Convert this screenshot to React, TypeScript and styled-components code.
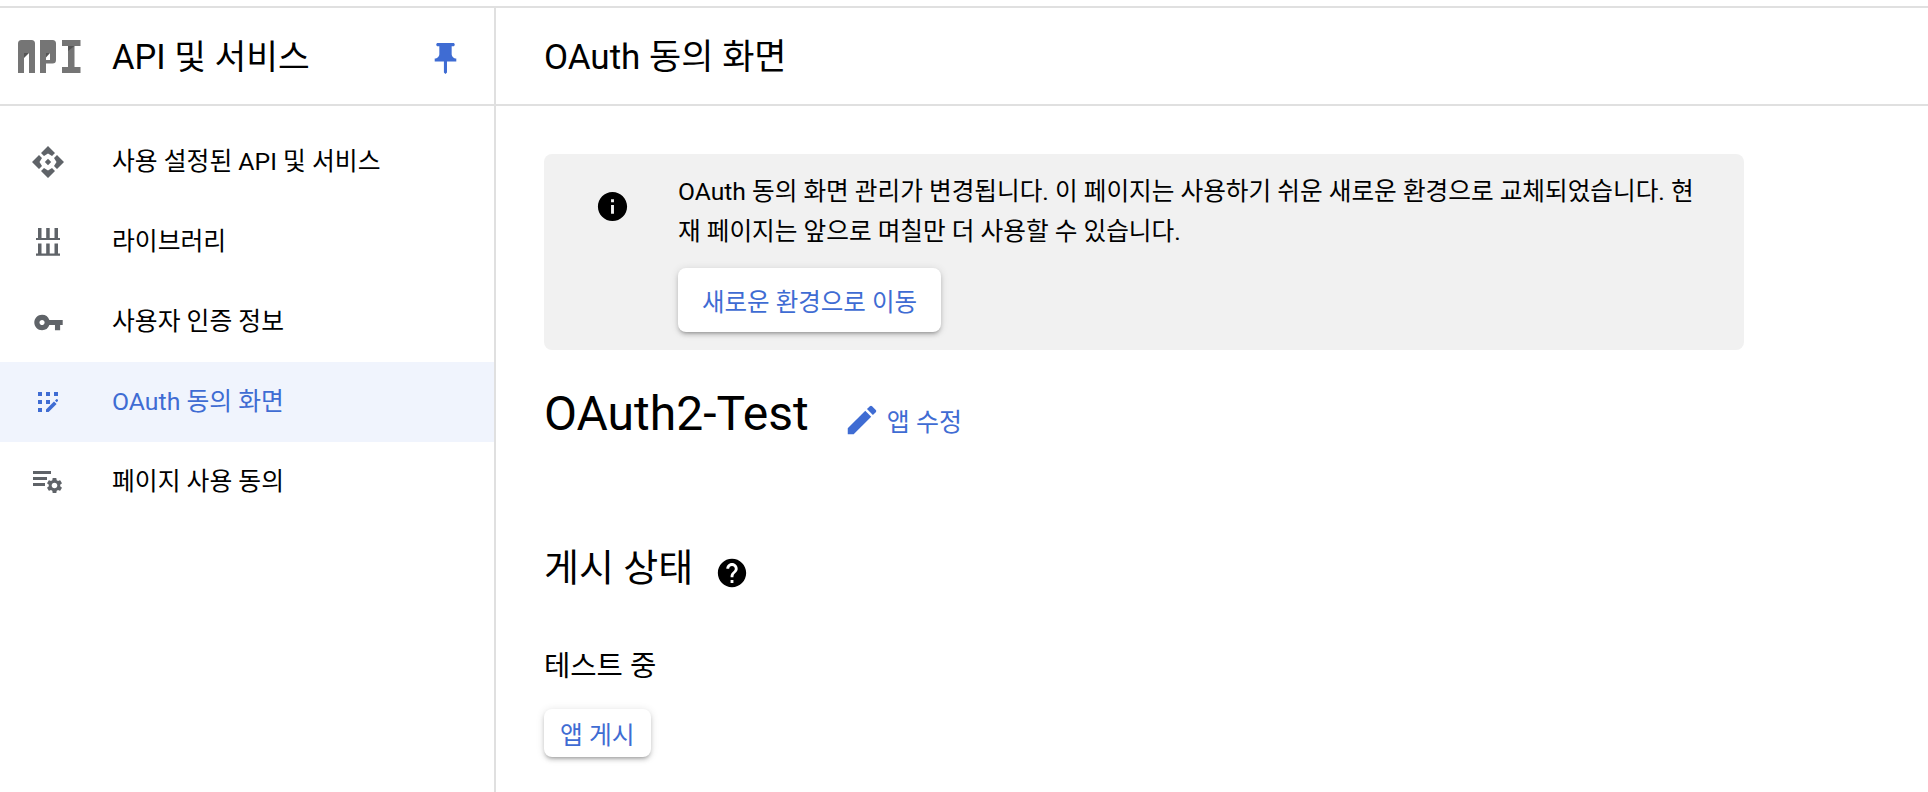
import React from 'react';
import { MdEdit, MdHelp, MdInfo, MdPushPin, MdSettings, MdVpnKey } from 'react-icons/md';
import styled, { createGlobalStyle } from 'styled-components';

const BLUE = '#3f6cd3';
const ICON_GREY = '#5f6368';

const GlobalStyle = createGlobalStyle`
  html, body {
    margin: 0;
    padding: 0;
    background: #fff;
    overflow: hidden;
  }

  body {
    font-family: Roboto, "Noto Sans CJK KR", sans-serif;
    color: #000;
  }
`;

const ApiLogo = () => (
  <svg width="63" height="33" viewBox="0 0 63 33" fill="#757575">
    <path d="M0 3.500A3.500 3.500 0 0 1 3.500 0h10A3.500 3.500 0 0 1 17 3.500V33h-6V13H6v20H0z" />
    <path fill="#555" d="M6 13h5l-5 5z" />
    <path d="M22 0h12.500A3.500 3.500 0 0 1 38 3.500V20a3.500 3.500 0 0 1-3.500 3.500H28V33h-6zM28 13v7h4v-7z" fillRule="evenodd" />
    <path fill="#555" d="M28 13h4l-4 4.500z" />
    <path d="M44 0h18.500v6h-6v21h6v6H44v-6h6V6h-6z" />
    <path fill="#555" d="M50 6h6.500L50 11z" />
  </svg>
);

const ApisIcon = () => (
  <svg width="32" height="32" viewBox="0 0 32 32" fill={ICON_GREY}>
    <path d="M16 0l7 7-3 3-4-2.500L12 10 9 7z" />
    <path d="M16 32l7-7-3-3-4 2.500L12 22l-3 3z" />
    <path d="M0 16l7-7 3 3-2.500 4 2.500 4-3 3z" />
    <path d="M32 16l-7-7-3 3 2.500 4-2.500 4 3 3z" />
    <path d="M16 12.800l3.200 3.200-3.200 3.200-3.200-3.200z" />
  </svg>
);

const LibraryIcon = () => (
  <svg width="24" height="28" viewBox="0 0 24 28" fill={ICON_GREY}>
    <path d="M2 0h3.500v10H2zM10.200 0h3.500v10h-3.500zM18.500 0H22v10h-3.500zM0 10h24v2H0z" />
    <path d="M2 15.500h3.500v10H2zM10.200 15.500h3.500v10h-3.500zM18.500 15.500H22v10h-3.500zM0 25.500h24v2.200H0z" />
  </svg>
);

const ConsentIcon = () => (
  <svg width="20" height="20" viewBox="0 0 20 20" fill={BLUE}>
    <path d="M0 0h4v4H0zM8 0h4v4H8zM16 0h4v4h-4zM0 8h4v4H0zM8 8h4v4H8zM0 16h4v4H0z" />
    <path d="M8 20v-2.600l8-8 2.600 2.600-8 8zM17 8.600l1.300-1.300a.7.7 0 0 1 1 0l.7.700v1l-1.400 1.300z" />
  </svg>
);

const PageUsageIcon = () => (
  <svg width="30" height="23" viewBox="0 0 30 23" fill={ICON_GREY}>
    <path d="M0 0h18v3H0zM0 6h14v3H0zM0 12h12v3H0z" />
    <MdSettings x="12" y="5" size="19" color={ICON_GREY} />
  </svg>
);

const navItems = [
  { label: '사용 설정된 API 및 서비스', icon: <ApisIcon /> },
  { label: '라이브러리', icon: <LibraryIcon /> },
  { label: '사용자 인증 정보', icon: <MdVpnKey size={31} color={ICON_GREY} /> },
  { label: 'OAuth 동의 화면', icon: <ConsentIcon />, active: true },
  { label: '페이지 사용 동의', icon: <PageUsageIcon /> },
];

const App = () => (
  <>
    <GlobalStyle />
    <Page>
      <Sidebar>
        <SidebarHeader>
          <LogoSlot>
            <ApiLogo />
          </LogoSlot>
          <ProductName>API 및 서비스</ProductName>
          <PinSlot>
            <MdPushPin size={37} color={BLUE} />
          </PinSlot>
        </SidebarHeader>
        <Nav>
          {navItems.map((item) => (
            <NavRow key={item.label} $active={item.active}>
              <NavIcon>{item.icon}</NavIcon>
              <NavLabel>{item.label}</NavLabel>
            </NavRow>
          ))}
        </Nav>
      </Sidebar>
      <Main>
        <PageHeader>OAuth 동의 화면</PageHeader>
        <Content>
          <Banner>
            <BannerIcon>
              <MdInfo size={35} />
            </BannerIcon>
            <BannerBody>
              <BannerText>
                OAuth 동의 화면 관리가 변경됩니다. 이 페이지는 사용하기 쉬운 새로운 환경으로 교체되었습니다. 현재 페이지는 앞으로 며칠만 더 사용할 수 있습니다.
              </BannerText>
              <RaisedButton $large>새로운 환경으로 이동</RaisedButton>
            </BannerBody>
          </Banner>
          <TitleRow>
            <AppTitle>OAuth2-Test</AppTitle>
            <EditLink>
              <MdEdit size={38} />
              앱 수정
            </EditLink>
          </TitleRow>
          <SectionRow>
            <SectionTitle>게시 상태</SectionTitle>
            <HelpIcon size={34} />
          </SectionRow>
          <StatusText>테스트 중</StatusText>
          <RaisedButton>앱 게시</RaisedButton>
        </Content>
      </Main>
    </Page>
  </>
);

const Page = styled.div`
  display: flex;
  width: 1928px;
  height: 792px;
  margin-top: 6px;
  border-top: 2px solid #e0e0e0;
  box-sizing: border-box;
  overflow: hidden;
`;

const Sidebar = styled.aside`
  width: 496px;
  flex-shrink: 0;
  border-right: 2px solid #e0e0e0;
  box-sizing: border-box;
`;

const SidebarHeader = styled.div`
  display: flex;
  align-items: center;
  height: 98px;
  border-bottom: 2px solid #e0e0e0;
  box-sizing: border-box;
`;

const LogoSlot = styled.div`
  display: flex;
  width: 112px;
  padding-left: 18px;
  box-sizing: border-box;
`;

const ProductName = styled.div`
  flex: 1;
  margin-bottom: 5px;
  font-size: 34.500px;
`;

const PinSlot = styled.div`
  display: flex;
  margin: 4px 30px 0 0;
`;

const Nav = styled.nav`
  display: flex;
  flex-direction: column;
  padding-top: 16px;
`;

const NavRow = styled.div<{ $active?: boolean }>`
  display: flex;
  align-items: center;
  height: 80px;
  font-size: 24.800px;
  color: ${(p) => (p.$active ? BLUE : '#000')};
  background: ${(p) => (p.$active ? '#f0f4fd' : 'transparent')};
`;

const NavIcon = styled.span`
  display: flex;
  align-items: center;
  justify-content: center;
  width: 96px;
  margin-right: 16px;
`;

const NavLabel = styled.span`
  margin-bottom: 6px;
`;

const Main = styled.main`
  flex: 1;
  min-width: 0;
`;

const PageHeader = styled.div`
  display: flex;
  align-items: center;
  height: 98px;
  padding: 0 0 5px 48px;
  font-size: 35px;
  border-bottom: 2px solid #e0e0e0;
  box-sizing: border-box;
`;

const Content = styled.div`
  padding: 48px 0 0 48px;
`;

const Banner = styled.div`
  display: flex;
  width: 1200px;
  height: 196px;
  background: #f1f1f1;
  border-radius: 8px;
`;

const BannerIcon = styled.div`
  display: flex;
  justify-content: center;
  width: 134px;
  padding: 35px 0 0 2px;
  box-sizing: border-box;
`;

const BannerBody = styled.div`
  width: 1022px;
  padding-top: 18px;
`;

const BannerText = styled.p`
  margin: 0 0 16px;
  font-size: 24.650px;
  line-height: 40px;
`;

const RaisedButton = styled.button<{ $large?: boolean }>`
  display: block;
  height: ${(p) => (p.$large ? '64px' : '48px')};
  padding: 0 ${(p) => (p.$large ? '24px' : '16px')};
  border: 0;
  border-radius: 8px;
  background: #fff;
  color: ${BLUE};
  font-family: inherit;
  font-size: ${(p) => (p.$large ? '24.500px' : '24.800px')};
  box-shadow: 0 3px 3px -2px rgba(0, 0, 0, 0.2), 0 3px 4px rgba(0, 0, 0, 0.14), 0 1px 8px rgba(0, 0, 0, 0.12);
`;

const TitleRow = styled.div`
  display: flex;
  align-items: center;
  margin-top: 28px;
  height: 70px;
`;

const AppTitle = styled.h1`
  margin: 0 34px 0 0;
  font-size: 48px;
  font-weight: 400;
`;

const EditLink = styled.a`
  display: flex;
  align-items: center;
  gap: 6px;
  margin-top: 14px;
  font-size: 25px;
  color: ${BLUE};
`;

const SectionRow = styled.div`
  display: flex;
  align-items: center;
  gap: 22px;
  margin-top: 89px;
`;

const SectionTitle = styled.h2`
  margin: 0;
  font-size: 38px;
  font-weight: 400;
`;

const HelpIcon = styled(MdHelp)`
  margin-top: 16px;
`;

const StatusText = styled.div`
  margin: 51px 0 25px;
  font-size: 28.600px;
`;

export default App;
